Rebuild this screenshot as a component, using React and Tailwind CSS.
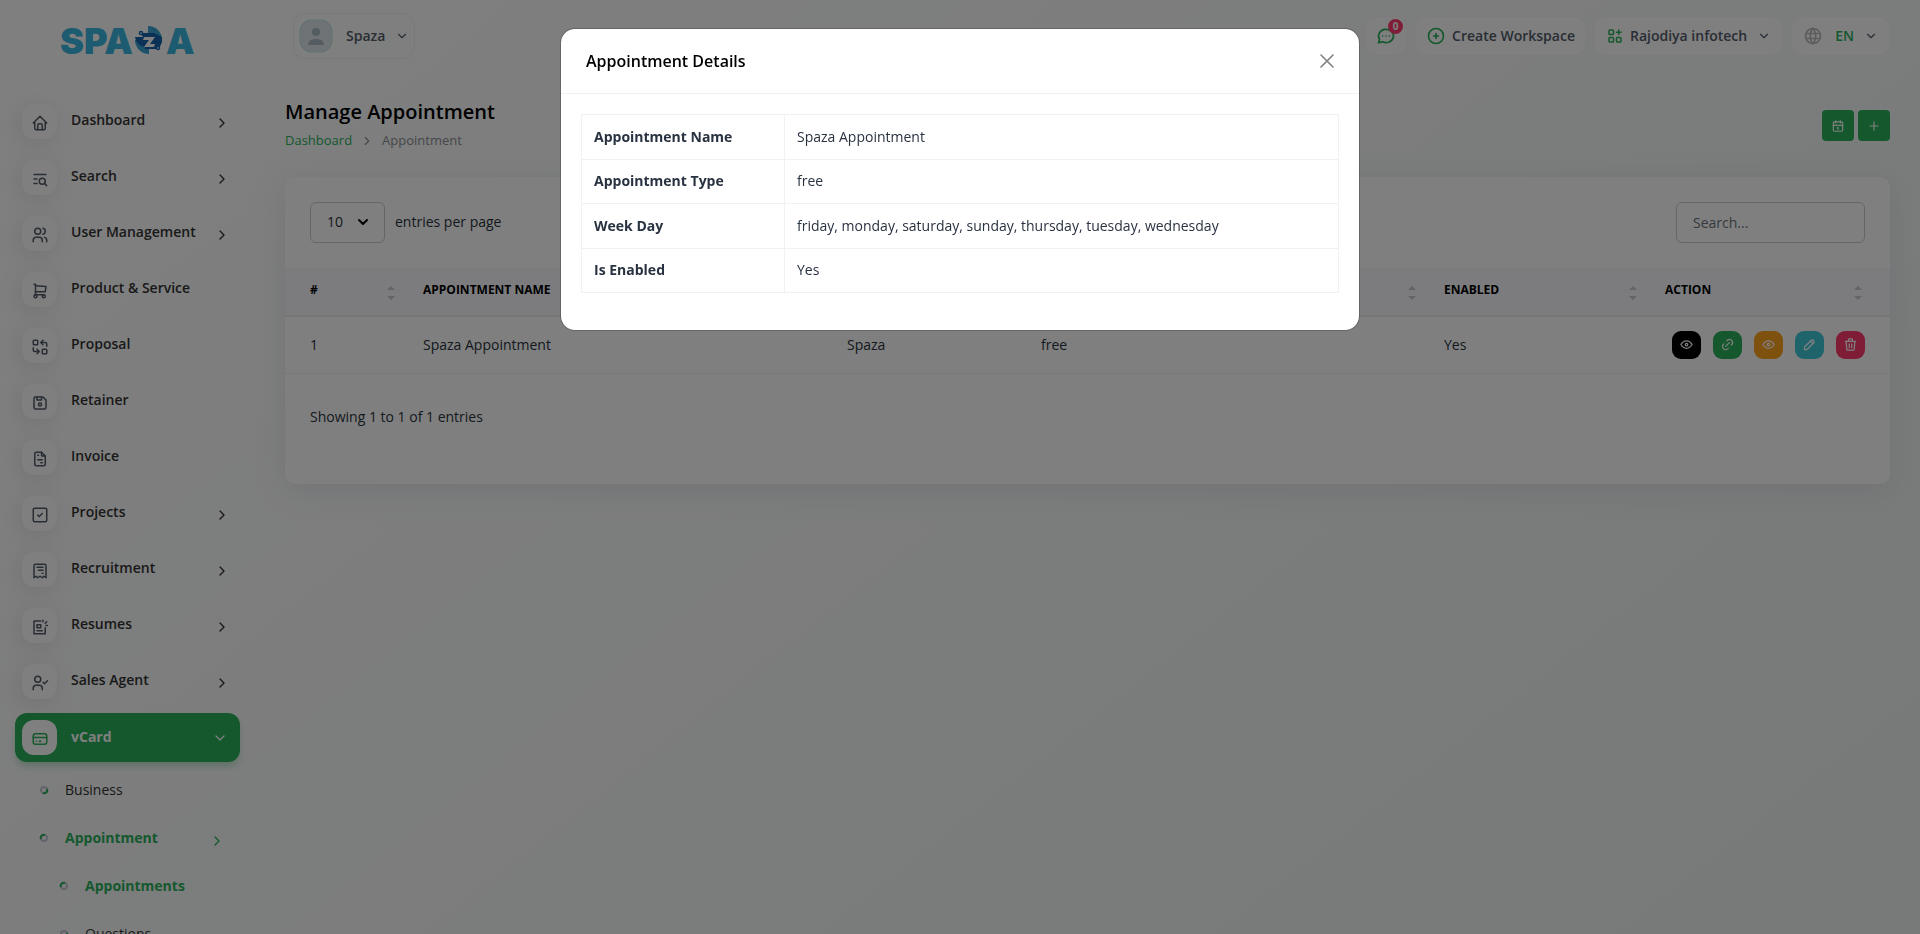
import {
  TbHome, TbListSearch, TbUsers, TbShoppingCart, TbReplace, TbDeviceFloppy, TbFileInvoice,
  TbCreditCard, TbChevronRight, TbChevronDown, TbCirclePlus, TbApps, TbWorld, TbCalendar,
  TbPlus, TbEye, TbLink, TbPencil, TbTrash,
} from "react-icons/tb";

const Icon24 = ({ d, children, ...props }) => (
  <svg viewBox="0 0 24 24" width="1em" height="1em" fill="none" stroke="currentColor" strokeWidth="2" strokeLinecap="round" strokeLinejoin="round" {...props}>
    <path d={d} />
    {children}
  </svg>
);

const ProjectIcon = () => (
  <Icon24 d="M9 12l2 2 4-4">
    <rect x="3" y="3" width="18" height="18" rx="2" />
  </Icon24>
);
const ReceiptIcon = () => (
  <Icon24 d="M4 21V5a2 2 0 0 1 2-2h12a2 2 0 0 1 2 2v16l-3-2-2 2-3-2-3 2-2-2-3 2M8 7h8M10 11h6M15 15h1" />
);
const ResumeIcon = () => (
  <Icon24 d="M13 4H4v17h15v-8M8 9h5v4H8zM8 17h7M16 5V3M19 7l2-2M20 10h2" />
);
const AgentIcon = () => (
  <Icon24 d="M3 21v-2a4 4 0 0 1 4-4h4a4 4 0 0 1 4 4v2M16 11l2 2 4-4">
    <circle cx="9" cy="7" r="4" />
  </Icon24>
);
const ChatIcon = (props) => (
  <Icon24 d="M3 20l1.3-3.9a9 8 0 1 1 3.4 2.9L3 20M12 12v.01M8 12v.01M16 12v.01" {...props} />
);

const menu = [
  { name: "Dashboard", icon: TbHome, sub: true },
  { name: "Search", icon: TbListSearch, sub: true },
  { name: "User Management", icon: TbUsers, sub: true },
  { name: "Product & Service", icon: TbShoppingCart },
  { name: "Proposal", icon: TbReplace },
  { name: "Retainer", icon: TbDeviceFloppy },
  { name: "Invoice", icon: TbFileInvoice },
  { name: "Projects", icon: ProjectIcon, sub: true },
  { name: "Recruitment", icon: ReceiptIcon, sub: true },
  { name: "Resumes", icon: ResumeIcon, sub: true },
  { name: "Sales Agent", icon: AgentIcon, sub: true },
];

const columns = [
  { name: "#", width: "w-[113px]" },
  { name: "Appointment Name", width: "w-[424px]" },
  { name: "Business", width: "w-[194px]" },
  { name: "Type", width: "" },
  { name: "Enabled", width: "w-[221px]" },
  { name: "Action", width: "w-[250px]" },
];

const actions = [
  { name: "Preview", icon: TbEye, color: "bg-black" },
  { name: "Copy link", icon: TbLink, color: "bg-[#2bb05c]" },
  { name: "Details", icon: TbEye, color: "bg-[#ffa21d]" },
  { name: "Edit", icon: TbPencil, color: "bg-[#3ec9d6]" },
  { name: "Delete", icon: TbTrash, color: "bg-[#ff3a6e]" },
];

const details = [
  ["Appointment Name", "Spaza Appointment"],
  ["Appointment Type", "free"],
  ["Week Day", "friday, monday, saturday, sunday, thursday, tuesday, wednesday"],
  ["Is Enabled", "Yes"],
];

const Logo = () => (
  <svg viewBox="0 0 134 30" className="w-[134px] h-[30px] overflow-visible" role="img" aria-label="Spaza">
    <g fill="#38b6e0" fontFamily="Inter, sans-serif" fontWeight="900" fontSize="36">
      <text x="-1" y="28">SPA</text>
      <text x="105" y="28">A</text>
    </g>
    <path d="M87 0a14 14 0 0 1 14 14H87z" fill="#38a5d2" />
    <path d="M88 28a14 14 0 0 1-14-14h14z" fill="#38a5d2" />
    <path d="M80 8h15l6 3v5q-1 4-4 6H87l-7-2q-5-3-6-9h8z" fill="#1663ae" />
    <path d="M83 11h11l-5 7h5l-1 3H83l5-7h-6z" fill="#fff" />
    <path d="M81 8h13M84 22h12" stroke="#1663ae" strokeWidth="2" />
    <circle cx="80" cy="7" r="1.6" fill="#b8dcef" stroke="#1663ae" strokeWidth="1.4" />
    <circle cx="97" cy="22" r="1.6" fill="#b8dcef" stroke="#1663ae" strokeWidth="1.4" />
  </svg>
);

const Ring = ({ active }) => (
  <svg viewBox="0 0 10 10" className="size-[10px] shrink-0" fill="none" strokeWidth="2">
    <circle cx="5" cy="5" r="3" stroke="#c3c8d4" />
    <path d={active ? "M2 6a3 3 0 0 1 4-4" : "M8 4a3 3 0 0 1-4 4"} stroke="#2bb05c" />
  </svg>
);

const SortIcon = () => (
  <svg viewBox="0 0 8 16" className="w-2 h-4 mt-1" fill="#c9c9cb">
    <path d="M0 5l4-4 4 4zM0 11l4 4 4-4z" />
  </svg>
);

const Sidebar = () => (
  <aside className="w-[255px] shrink-0 pl-[15px] pr-[15px]">
    <a href="#home" className="flex h-[93px] pt-[26px] pl-[46px]">
      <Logo />
    </a>
    <nav>
      {menu.map(({ name, icon: Icon, sub }) => (
        <a key={name} href="#menu" className="flex h-14 items-center pl-[7px] pr-[10px]">
          <span className="size-[35px] rounded-xl bg-white shadow-[-3px_4px_23px_rgba(0,0,0,0.1)] flex items-center justify-center text-[18px] text-[#525b69] pt-[3px]">
            <Icon />
          </span>
          <span className="ml-[14px] flex-1 text-sm font-semibold text-[#333] pb-[2px]">{name}</span>
          {sub && <TbChevronRight className="text-[16px] text-[#333] mt-[4px] shrink-0" />}
        </a>
      ))}

      <a
        href="#vcard"
        className="mt-1 flex h-[49px] items-center rounded-xl bg-[#2bb05c] pl-[7px] pr-3 text-white shadow-[0_5px_7px_-1px_rgba(43,176,92,0.3)]"
      >
        <span className="size-[35px] rounded-xl bg-white flex items-center justify-center text-[18px] text-[#2bb05c] pt-[3px]">
          <TbCreditCard />
        </span>
        <span className="ml-[14px] flex-1 text-sm font-bold pb-[2px]">vCard</span>
        <TbChevronDown className="text-[16px]" />
      </a>

      <div className="pt-1 text-sm text-[#333]">
        <a href="#business" className="flex h-12 items-center pl-6">
          <Ring />
          <span className="ml-4 font-medium">Business</span>
        </a>
        <a href="#appointment" className="flex h-12 items-center pl-6 pr-[15px] text-[#2bb05c]">
          <Ring active />
          <span className="ml-4 flex-1 font-bold">Appointment</span>
          <TbChevronRight className="text-[16px] mt-[6px]" />
        </a>
        <a href="#appointments" className="flex h-12 items-center pl-11 text-[#2bb05c]">
          <Ring active />
          <span className="ml-4 font-bold">Appointments</span>
        </a>
        <a href="#questions" className="flex h-12 items-center pl-11">
          <Ring />
          <span className="ml-4 font-medium">Questions</span>
        </a>
      </div>
    </nav>
  </aside>
);

const pill = "flex h-10 items-center rounded-xl border border-[#f8f8f8] bg-white";

const TopBar = () => (
  <header className="flex h-[72px] items-center gap-2 text-sm font-semibold text-[#525b69]">
    <button className="ml-2 mr-auto flex h-[46px] items-center rounded-xl border border-[#f1f1f1] px-[5px]">
      <svg viewBox="0 0 34 34" className="size-[34px]">
        <rect x="1" y="1" width="32" height="32" rx="11" fill="#dfe6ea" stroke="#c0e8d8" />
        <circle cx="17" cy="13" r="4" fill="#a9b8c2" />
        <path d="M9 26q0-6 8-6t8 6z" fill="#a9b8c2" />
      </svg>
      <span className="ml-[13px]">Spaza</span>
      <TbChevronDown className="ml-[10px] text-[14px]" />
    </button>
    <button className={`${pill} relative px-[10px]`} aria-label="Messages">
      <ChatIcon className="text-[20px] text-[#2bb05c]" />
      <span className="absolute right-[3px] top-[2px] flex size-[15px] items-center justify-center rounded-full bg-[#ff3a6e] text-[10px] font-bold text-white">
        0
      </span>
    </button>
    <button className={`${pill} px-[10px]`}>
      <TbCirclePlus className="mr-[6px] text-[20px] text-[#2bb05c]" />
      Create Workspace
    </button>
    <button className={`${pill} px-[11px]`}>
      <TbApps className="mr-[6px] text-[18px] text-[#2bb05c]" />
      Rajodiya infotech
      <TbChevronDown className="ml-[10px] text-[14px]" />
    </button>
    <button className={`${pill} px-[11px] text-[#2bb05c]`}>
      <TbWorld className="mr-3 text-[20px] text-[#bbb]" />
      EN
      <TbChevronDown className="ml-[10px] text-[14px] text-[#525b69]" />
    </button>
  </header>
);

const AppointmentTable = () => (
  <section className="mt-[26px] overflow-hidden rounded-[10px] bg-white pb-[57px] text-sm text-[#293240] shadow-[0_6px_30px_rgba(182,186,203,0.3)]">
    <div className="flex items-center justify-between px-[25px] py-[25px]">
      <label className="flex items-center gap-[10px]">
        <span className="relative">
          <select className="h-[41px] w-[75px] appearance-none rounded-md border border-[#ccc] bg-white pl-4">
            <option>10</option>
          </select>
          <TbChevronDown className="pointer-events-none absolute right-[14px] top-3 text-[16px] text-black" strokeWidth="3" />
        </span>
        entries per page
      </label>
      <input
        type="search"
        aria-label="Search entries"
        placeholder="Search..."
        className="h-[41px] w-[189px] rounded-md border border-[#ccc] px-4 placeholder:text-[#6c757d]"
      />
    </div>

    <table className="w-full table-fixed">
      <thead className="border-b-2 border-[#ececee] bg-[#f8f9fd]">
        <tr>
          {columns.map((col) => (
            <th key={col.name} className={`h-[48px] pl-[25px] pr-[3px] text-left last:pr-7 ${col.width}`}>
              <span className="flex items-center justify-between">
                <span className="text-xs font-bold uppercase text-black pb-[2px]">{col.name}</span>
                <SortIcon />
              </span>
            </th>
          ))}
        </tr>
      </thead>
      <tbody>
        <tr className="border-b border-[#f1f1f1]">
          <td className="h-[58px] pl-[25px]">1</td>
          <td className="pl-[25px]">Spaza Appointment</td>
          <td className="pl-[25px]">Spaza</td>
          <td className="pl-[25px]">free</td>
          <td className="pl-[25px]">Yes</td>
          <td className="pr-[25px]">
            <div className="flex justify-end gap-3">
              {actions.map(({ name, icon: Icon, color }) => (
                <button key={name} aria-label={name} className={`flex h-7 w-[29px] items-center justify-center rounded-[9px] text-[15px] text-white ${color}`}>
                  <Icon />
                </button>
              ))}
            </div>
          </td>
        </tr>
      </tbody>
    </table>

    <p className="px-[25px] pt-[33px]">Showing 1 to 1 of 1 entries</p>
  </section>
);

const DetailsModal = () => (
  <div className="fixed inset-0 bg-black/50 pt-7">
    <div role="dialog" aria-labelledby="details-title" className="mx-auto max-w-[800px] rounded-[15px] border border-black/20 bg-white bg-clip-padding">
      <div className="flex h-[65px] items-center justify-between border-b border-[#f1f1f1] px-[25px]">
        <h2 id="details-title" className="text-base font-semibold text-black">Appointment Details</h2>
        <button aria-label="Close">
          <svg viewBox="0 0 14 14" className="size-[14px]" stroke="#7f7f7f" strokeWidth="1.6" strokeLinecap="round">
            <path d="M1 1l12 12M13 1L1 13" />
          </svg>
        </button>
      </div>
      <div className="px-5 pt-5 pb-[37px]">
        <table className="h-[179px] w-full border-collapse text-sm text-[#293240]">
          <tbody>
            {details.map(([label, value]) => (
              <tr key={label}>
                <th className="w-[203px] border border-[#f1f1f1] px-3 text-left font-bold">{label}</th>
                <td className="border border-[#f1f1f1] px-3">{value}</td>
              </tr>
            ))}
          </tbody>
        </table>
      </div>
    </div>
  </div>
);

export default function App() {
  return (
    <div className="flex h-screen overflow-hidden bg-[linear-gradient(141.55deg,#fff_3.46%,#f0f4f3_99.86%)] font-['Open_Sans',sans-serif]">
      <Sidebar />
      <main className="min-w-0 flex-1 pl-[30px] pr-[30px]">
        <TopBar />
        <div className="flex items-start justify-between pt-[26px]">
          <div>
            <h1 className="text-xl font-semibold text-black">Manage Appointment</h1>
            <nav className="mt-[5px] flex items-center text-[13px] text-[#8a8f96]">
              <a href="#dashboard" className="text-[#2bb05c]">Dashboard</a>
              <TbChevronRight className="mx-2 text-[14px]" />
              Appointment
            </nav>
          </div>
          <div className="mt-3 flex gap-1 text-sm text-white">
            <button aria-label="Calendar" className="flex h-[31px] w-8 items-center justify-center rounded bg-[#2bb05c]">
              <TbCalendar />
            </button>
            <button aria-label="Create" className="flex h-[31px] w-8 items-center justify-center rounded bg-[#2bb05c]">
              <TbPlus />
            </button>
          </div>
        </div>
        <AppointmentTable />
      </main>
      <DetailsModal />
    </div>
  );
}
